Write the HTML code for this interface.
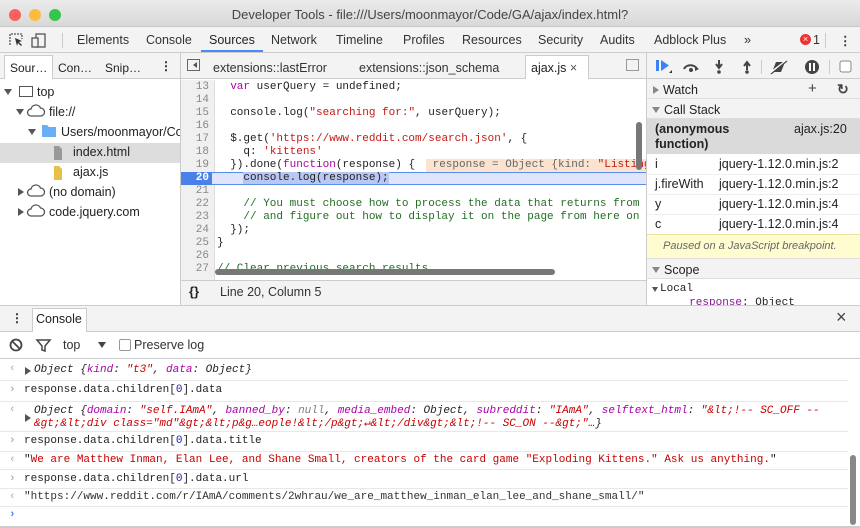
<!DOCTYPE html>
<html><head><meta charset="utf-8"><style>
*{box-sizing:border-box;margin:0;padding:0}
body{width:860px;height:528px;overflow:hidden;background:#fff;font-family:"Liberation Sans",sans-serif;font-size:12px;color:#222;position:relative}
.a{position:absolute}
.m{font-family:"Liberation Mono",monospace;font-size:11px;white-space:pre}
.kw{color:#a0a}.st{color:#c41a16}.cm{color:#236e25}.str{color:#c80000}
.cl{position:absolute;left:0;width:466px;height:13px;line-height:13px}
.ln{position:absolute;left:0;width:28px;text-align:right;color:#888}
.cx{position:absolute;left:36px}
.row{position:absolute;left:0;width:848px;border-bottom:1px solid #e8e8e8}
.tab{position:absolute;top:33px;font-size:12.5px;color:#333}
.tri{position:absolute;width:0;height:0;border-left:4px solid transparent;border-right:4px solid transparent;border-top:6px solid #555}
.trr{position:absolute;width:0;height:0;border-top:4px solid transparent;border-bottom:4px solid transparent;border-left:6px solid #555}
</style></head><body>
<!-- title bar -->
<div class="a" style="left:0;top:0;width:860px;height:27px;background:linear-gradient(#ebebeb,#d8d8d8);border-bottom:1px solid #c8c8c8"></div>
<div class="a" style="left:9px;top:9px;width:12px;height:12px;border-radius:50%;background:#fc605c"></div>
<div class="a" style="left:29px;top:9px;width:12px;height:12px;border-radius:50%;background:#fdbc40"></div>
<div class="a" style="left:49px;top:9px;width:12px;height:12px;border-radius:50%;background:#34c84a"></div>
<div class="a" style="left:0;width:860px;top:7px;text-align:center;font-size:13px;color:#444">Developer Tools - file:///Users/moonmayor/Code/GA/ajax/index.html?</div>
<!-- main tabs -->
<div class="a" style="left:0;top:27px;width:860px;height:26px;background:#f3f3f3;border-bottom:1px solid #ccc"></div>
<svg class="a" style="left:9px;top:32px" width="40" height="16"><path d="M1 13V2h12v5" fill="none" stroke="#555" stroke-width="1.3" stroke-dasharray="2 1"/><path d="M6 6l7 3-3 1 3 3-1 1-3-3-1 3z" fill="#333"/><rect x="27" y="2" width="9" height="13" fill="none" stroke="#555" stroke-width="1.3"/><rect x="23" y="6" width="6" height="9" fill="#f3f3f3" stroke="#555" stroke-width="1.3"/></svg>
<div class="a" style="left:62px;top:33px;width:1px;height:15px;background:#ccc"></div>
<div class="tab" style="left:77px">Elements</div>
<div class="tab" style="left:146px">Console</div>
<div class="tab" style="left:209px;color:#222">Sources</div>
<div class="a" style="left:201px;top:50px;width:62px;height:2px;background:#4a8af4"></div>
<div class="tab" style="left:271px">Network</div>
<div class="tab" style="left:336px">Timeline</div>
<div class="tab" style="left:403px">Profiles</div>
<div class="tab" style="left:462px">Resources</div>
<div class="tab" style="left:538px">Security</div>
<div class="tab" style="left:600px">Audits</div>
<div class="tab" style="left:654px">Adblock Plus</div>
<div class="tab" style="left:744px">»</div>
<div class="a" style="left:800px;top:34px;width:11px;height:11px;border-radius:50%;background:#e33;color:#fff;font-size:9px;line-height:11px;text-align:center">×</div>
<div class="tab" style="left:813px">1</div>
<div class="a" style="left:825px;top:33px;width:1px;height:15px;background:#ccc"></div>
<div class="tab" style="left:839px;font-weight:bold">⋮</div>
<!-- second row -->
<div class="a" style="left:0;top:53px;width:860px;height:26px;background:#f3f3f3;border-bottom:1px solid #ccc"></div>
<div class="a" style="left:4px;top:55px;width:49px;height:24px;background:#fff;border:1px solid #ccc;border-bottom:none"></div>
<div class="a" style="left:10px;top:61px">Sour…</div>
<div class="a" style="left:58px;top:61px">Con…</div>
<div class="a" style="left:105px;top:61px">Snip…</div>
<div class="a" style="left:160px;top:59px;font-weight:bold">⋮</div>
<div class="a" style="left:180px;top:53px;width:1px;background:#ccc;height:253px"></div>
<div class="a" style="left:187px;top:59px;width:13px;height:12px;border:1px solid #666"></div><div class="a" style="left:193px;top:62px;border:3px solid transparent;border-right:4px solid #555;border-left:none"></div>
<div class="a" style="left:213px;top:61px;font-size:12.5px;color:#333">extensions::lastError</div>
<div class="a" style="left:359px;top:61px;font-size:12.5px;color:#333">extensions::json_schema</div>
<div class="a" style="left:525px;top:55px;width:64px;height:24px;background:#fff;border:1px solid #ccc;border-bottom:none"></div>
<div class="a" style="left:531px;top:61px;font-size:12.5px">ajax.js <span style="color:#555">×</span></div>
<div class="a" style="left:626px;top:59px;width:13px;height:12px;border:1px solid #999"></div>
<div class="a" style="left:646px;top:53px;width:1px;height:253px;background:#ccc"></div>
<svg class="a" style="left:654px;top:58px" width="206" height="18"><rect x="2" y="2" width="3" height="11" fill="#3b82f6"/><path d="M7 2l8 5.5-8 5.5z" fill="#3b82f6"/><path d="M15 15l3 0 0-3z" fill="#333"/><path d="M30 11a7 6 0 0 1 13 0" fill="none" stroke="#444" stroke-width="2"/><path d="M41 8l4 3-4 2z" fill="#444"/><circle cx="37" cy="12" r="2" fill="#444"/><path d="M65 2v7M62 6l3 4 3-4" stroke="#444" stroke-width="2" fill="none"/><circle cx="65" cy="14" r="1.8" fill="#444"/><path d="M93 12V5M90 8l3-4 3 4" stroke="#444" stroke-width="2" fill="none"/><circle cx="93" cy="14" r="1.8" fill="#444"/><rect x="107" y="2" width="1" height="14" fill="#ccc"/><path d="M118 14l4-10h9l-4 10z" fill="#444"/><path d="M116 15l16-12" stroke="#fff" stroke-width="2"/><path d="M117 16l16-13" stroke="#444" stroke-width="1.2"/><circle cx="158" cy="9" r="7" fill="#444"/><rect x="155" y="5" width="2" height="8" fill="#fff"/><rect x="159" y="5" width="2" height="8" fill="#fff"/><rect x="175" y="2" width="1" height="14" fill="#ccc"/><rect x="186" y="3" width="11" height="11" rx="2" fill="#fff" stroke="#888"/></svg>
<!-- navigator -->
<div class="a" style="left:0;top:143px;width:180px;height:20px;background:#ddd"></div>
<div class="tri" style="left:4px;top:89px"></div>
<div class="a" style="left:19px;top:86px;width:14px;height:11px;border:1.5px solid #555"></div>
<div class="a" style="left:37px;top:85px;font-size:12.5px">top</div>
<div class="tri" style="left:16px;top:109px"></div>
<svg class="a" style="left:26px;top:104px" width="20" height="14"><path d="M14 12H5a3.5 3.5 0 0 1 0-7a5 5 0 0 1 9.5-1a4 4 0 0 1 0 8z" fill="none" stroke="#555" stroke-width="1.3"/></svg>
<div class="a" style="left:49px;top:105px;font-size:12.5px">file://</div>
<div class="tri" style="left:28px;top:129px"></div>
<svg class="a" style="left:41px;top:124px" width="16" height="14"><path d="M1 1h5l2 2h7v10H1z" fill="#6aaef5"/></svg>
<div class="a" style="left:61px;top:125px;font-size:12.5px;white-space:nowrap;width:119px;overflow:hidden">Users/moonmayor/Code</div>
<svg class="a" style="left:53px;top:145px" width="10" height="16"><path d="M1 1h5l3 3v11H1z" fill="#999"/></svg>
<div class="a" style="left:73px;top:145px;font-size:12.5px">index.html</div>
<svg class="a" style="left:53px;top:165px" width="10" height="16"><path d="M1 1h5l3 3v11H1z" fill="#e6c14a"/></svg>
<div class="a" style="left:73px;top:165px;font-size:12.5px">ajax.js</div>
<div class="trr" style="left:18px;top:188px"></div>
<svg class="a" style="left:26px;top:184px" width="20" height="14"><path d="M14 12H5a3.5 3.5 0 0 1 0-7a5 5 0 0 1 9.5-1a4 4 0 0 1 0 8z" fill="none" stroke="#555" stroke-width="1.3"/></svg>
<div class="a" style="left:49px;top:185px;font-size:12.5px">(no domain)</div>
<div class="trr" style="left:18px;top:208px"></div>
<svg class="a" style="left:26px;top:204px" width="20" height="14"><path d="M14 12H5a3.5 3.5 0 0 1 0-7a5 5 0 0 1 9.5-1a4 4 0 0 1 0 8z" fill="none" stroke="#555" stroke-width="1.3"/></svg>
<div class="a" style="left:49px;top:205px;font-size:12.5px">code.jquery.com</div>
<!-- code -->
<div class="a" style="left:181px;top:80px;width:465px;height:200px;overflow:hidden">
<div class="a" style="left:0;top:0;width:34px;height:200px;background:#f0f0f0;border-right:1px solid #ddd"></div>
<div class="m a" style="left:0;top:1px">
<div class="cl" style="top:0"><span class="ln">13</span><span class="cx">  <span class="kw">var</span> userQuery = undefined;</span></div>
<div class="cl" style="top:13px"><span class="ln">14</span></div>
<div class="cl" style="top:26px"><span class="ln">15</span><span class="cx">  console.log(<span class="st">"searching for:"</span>, userQuery);</span></div>
<div class="cl" style="top:39px"><span class="ln">16</span></div>
<div class="cl" style="top:52px"><span class="ln">17</span><span class="cx">  $.get(<span class="st">'https://www.reddit.com/search.json'</span>, {</span></div>
<div class="cl" style="top:65px"><span class="ln">18</span><span class="cx">    q: <span class="st">'kittens'</span></span></div>
<div class="cl" style="top:78px"><span class="ln">19</span><span class="cx">  }).done(<span class="kw">function</span>(response) {</span><span class="a" style="left:245px;top:0;width:230px;height:13px;background:#fbe3d0;color:#666"> response = Object {kind: <span class="st">"Listing"</span></span></div>
<div class="cl" style="top:91px;background:#dfe6fb;border:1px solid #5a8cef;border-left:none"><span class="a" style="left:0;top:-1px;width:31px;height:13px;background:#4a80ea;color:#fff;font-weight:bold;text-align:right;padding-right:3px">20</span><span class="cx" style="top:-1px">    <span style="background:#b8c8f3">console.log(response);</span></span></div>
<div class="cl" style="top:104px"><span class="ln">21</span></div>
<div class="cl" style="top:117px"><span class="ln">22</span><span class="cx cm">    // You must choose how to process the data that returns from</span></div>
<div class="cl" style="top:130px"><span class="ln">23</span><span class="cx cm">    // and figure out how to display it on the page from here on</span></div>
<div class="cl" style="top:143px"><span class="ln">24</span><span class="cx">  });</span></div>
<div class="cl" style="top:156px"><span class="ln">25</span><span class="cx">}</span></div>
<div class="cl" style="top:169px"><span class="ln">26</span></div>
<div class="cl" style="top:182px"><span class="ln">27</span><span class="cx cm">// Clear previous search results.</span></div>
</div>
<div class="a" style="left:34px;top:189px;width:340px;height:6px;border-radius:3px;background:#777"></div>
<div class="a" style="left:455px;top:42px;width:6px;height:48px;border-radius:3px;background:#777"></div>
</div>
<div class="a" style="left:181px;top:280px;width:465px;height:25px;background:#f3f3f3;border-top:1px solid #ccc"></div>
<div class="a" style="left:189px;top:284px;font-weight:bold;font-size:13px">{}</div>
<div class="a" style="left:220px;top:285px;font-size:12.5px;color:#333">Line 20, Column 5</div>
<!-- right panel -->
<div class="a" style="left:647px;top:79px;width:213px;height:227px;background:#fff"></div>
<div class="a" style="left:647px;top:79px;width:213px;height:20px;background:#f3f3f3;border-bottom:1px solid #ddd"></div>
<div class="trr" style="left:653px;top:86px;border-left-color:#888"></div>
<div class="a" style="left:663px;top:83px;font-size:12.5px">Watch</div>
<div class="a" style="left:808px;top:80px;font-size:15px;color:#444">+</div>
<div class="a" style="left:837px;top:81px;font-size:14px;color:#444;font-weight:bold">↻</div>
<div class="a" style="left:647px;top:99px;width:213px;height:20px;background:#f3f3f3;border-bottom:1px solid #ddd"></div>
<div class="tri" style="left:652px;top:107px;border-top-color:#888"></div>
<div class="a" style="left:664px;top:103px;font-size:12.5px">Call Stack</div>
<div class="a" style="left:647px;top:119px;width:213px;height:35px;background:#dadada"></div>
<div class="a" style="left:655px;top:122px;font-size:12.5px;font-weight:bold;line-height:15px">(anonymous<br>function)</div>
<div class="a" style="left:794px;top:122px;font-size:12.5px">ajax.js:20</div>
<div class="a" style="left:647px;top:174px;width:213px;border-top:1px solid #eee"></div>
<div class="a" style="left:647px;top:194px;width:213px;border-top:1px solid #eee"></div>
<div class="a" style="left:647px;top:214px;width:213px;border-top:1px solid #eee"></div>
<div class="a" style="left:655px;top:157px;font-size:12.5px">i</div><div class="a" style="left:719px;top:157px;font-size:12.5px">jquery-1.12.0.min.js:2</div>
<div class="a" style="left:655px;top:177px;font-size:12.5px">j.fireWith</div><div class="a" style="left:719px;top:177px;font-size:12.5px">jquery-1.12.0.min.js:2</div>
<div class="a" style="left:655px;top:197px;font-size:12.5px">y</div><div class="a" style="left:719px;top:197px;font-size:12.5px">jquery-1.12.0.min.js:4</div>
<div class="a" style="left:655px;top:217px;font-size:12.5px">c</div><div class="a" style="left:719px;top:217px;font-size:12.5px">jquery-1.12.0.min.js:4</div>
<div class="a" style="left:647px;top:234px;width:213px;height:25px;background:#fffdd0;border-top:1px solid #e8e4a0;border-bottom:1px solid #ddd"></div>
<div class="a" style="left:663px;top:240px;font-size:11px;font-style:italic;color:#666">Paused on a JavaScript breakpoint.</div>
<div class="a" style="left:647px;top:259px;width:213px;height:20px;background:#f3f3f3;border-bottom:1px solid #ddd"></div>
<div class="tri" style="left:652px;top:267px;border-top-color:#888"></div>
<div class="a" style="left:664px;top:263px;font-size:12.5px">Scope</div>
<div class="tri" style="left:652px;top:287px;border-left-width:3px;border-right-width:3px;border-top-width:5px"></div>
<div class="a m" style="left:660px;top:283px">Local</div>
<div class="a m" style="left:676px;top:297px;color:#881391">  response<span style="color:#222">: Object</span></div>
<!-- console drawer -->
<div class="a" style="left:0;top:305px;width:860px;height:27px;background:#f3f3f3;border-top:1px solid #ccc;border-bottom:1px solid #ccc"></div>
<div class="a" style="left:11px;top:311px;font-weight:bold">⋮</div>
<div class="a" style="left:32px;top:308px;width:55px;height:24px;background:#fff;border:1px solid #ccc;border-bottom:none"></div>
<div class="a" style="left:36px;top:312px;font-size:12.5px">Console</div>
<div class="a" style="left:836px;top:307px;font-size:18px;color:#444">×</div>
<div class="a" style="left:0;top:332px;width:860px;height:27px;border-bottom:1px solid #ccc"></div>
<svg class="a" style="left:9px;top:338px" width="50" height="14"><circle cx="7" cy="7" r="5.5" fill="none" stroke="#444" stroke-width="1.8"/><path d="M3 3l8 8" stroke="#444" stroke-width="1.8"/><path d="M28 2h13l-5 6v5l-3-1v-4z" fill="none" stroke="#444" stroke-width="1.5"/></svg>
<div class="a" style="left:63px;top:338px;font-size:12.5px;color:#333">top</div>
<div class="tri" style="left:98px;top:342px;border-top-color:#444"></div>
<div class="a" style="left:119px;top:339px;width:12px;height:12px;border:1px solid #999;border-radius:2px"></div>
<div class="a" style="left:134px;top:338px;font-size:12.5px;color:#333">Preserve log</div>
<div class="m a" style="left:0;top:359px;width:848px">
<div class="row" style="top:0;height:22px"><span class="a" style="left:9px;top:4px;color:#aaa">‹</span><span class="trr" style="left:25px;top:8px"></span><span class="a" style="left:34px;top:5px;font-style:italic">Object {<span class="kw">kind</span>: <span class="str">"t3"</span>, <span class="kw">data</span>: Object}</span></div>
<div class="row" style="top:22px;height:21px"><span class="a" style="left:9px;top:3px;color:#999">›</span><span class="a" style="left:24px;top:3px">response.data.children[<span style="color:#1a1aa6">0</span>].data</span></div>
<div class="row" style="top:43px;height:30px"><span class="a" style="left:9px;top:2px;color:#aaa">‹</span><span class="trr" style="left:25px;top:12px"></span><span class="a" style="left:34px;top:3px;font-style:italic;line-height:13px">Object {<span class="kw">domain</span>: <span class="str">"self.IAmA"</span>, <span class="kw">banned_by</span>: <span style="color:#808080">null</span>, <span class="kw">media_embed</span>: Object, <span class="kw">subreddit</span>: <span class="str">"IAmA"</span>, <span class="kw">selftext_html</span>: <span class="str">"&amp;lt;!-- SC_OFF --</span>
<span class="str">&amp;gt;&amp;lt;div class="md"&amp;gt;&amp;lt;p&amp;g…eople!&amp;lt;/p&amp;gt;↵&amp;lt;/div&amp;gt;&amp;lt;!-- SC_ON --&amp;gt;"</span>…}</span></div>
<div class="row" style="top:73px;height:20px"><span class="a" style="left:9px;top:3px;color:#999">›</span><span class="a" style="left:24px;top:3px">response.data.children[<span style="color:#1a1aa6">0</span>].data.title</span></div>
<div class="row" style="top:93px;height:18px"><span class="a" style="left:9px;top:2px;color:#aaa">‹</span><span class="a" style="left:24px;top:2px">"<span class="str">We are Matthew Inman, Elan Lee, and Shane Small, creators of the card game "Exploding Kittens." Ask us anything.</span>"</span></div>
<div class="row" style="top:111px;height:19px"><span class="a" style="left:9px;top:3px;color:#999">›</span><span class="a" style="left:24px;top:3px">response.data.children[<span style="color:#1a1aa6">0</span>].data.url</span></div>
<div class="row" style="top:130px;height:18px"><span class="a" style="left:9px;top:2px;color:#aaa">‹</span><span class="a" style="left:24px;top:2px;color:#333">"https://www.reddit.com/r/IAmA/comments/2whrau/we_are_matthew_inman_elan_lee_and_shane_small/"</span></div>
<div class="a" style="left:9px;top:150px;color:#3b82f6;font-weight:bold">›</div>
</div>
<div class="a" style="left:850px;top:455px;width:6px;height:70px;border-radius:3px;background:#888"></div>
<div class="a" style="left:0;top:526px;width:860px;height:2px;background:#ccc"></div>
</body></html>
